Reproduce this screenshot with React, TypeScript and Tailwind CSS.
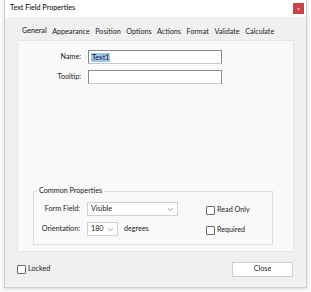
import React from "react";

const tabs = ["General", "Appearance", "Position", "Options", "Actions", "Format", "Validate", "Calculate"];

function Check({ label }: { label: string }) {
  return (
    <div className="flex items-center gap-[2px]">
      <span className="h-[9px] w-[9px] rounded-[1px] border border-[#6b6b6b] bg-white" />
      <span>{label}</span>
    </div>
  );
}

function Chevron() {
  return (
    <svg width="7" height="5" viewBox="0 0 7 5" className="text-[#8a8a8a]">
      <path d="M1 1.2 L3.5 3.6 L6 1.2" fill="none" stroke="currentColor" strokeWidth="0.8" />
    </svg>
  );
}

export default function App() {
  return (
    <div
      className="h-[292px] w-[311px] bg-[#fafafa] px-[4px] pb-[4px]"
      style={{ fontFamily: "Lato, 'Noto Sans', sans-serif" }}
    >
      <div className="flex h-[288px] flex-col border border-t-0 border-[#cfcfcf] bg-[#f0f0f0] text-[7.2px] text-[#1a1a1a] shadow-[0_1px_3px_rgba(0,0,0,0.15)]">
        <div className="flex h-[17px] items-center justify-between bg-white pl-[5px] pr-[2px]">
          <span className="text-[7.2px] font-medium text-[#111]">Text Field Properties</span>
          <span className="flex h-[11px] w-[11px] items-center justify-center bg-[#c9414a] text-[6px] leading-none text-white">
            ×
          </span>
        </div>

        <div className="flex flex-1 flex-col px-[12px] pt-[9px]">
          <div className="flex h-[14px] items-end gap-[5.5px] pl-[5px]">
            {tabs.map((t, i) => (
              <span
                key={t}
                className={i === 0 ? "pb-[3px] text-[#111]" : "pb-[2px] text-[#222]"}
              >
                {t}
              </span>
            ))}
          </div>

          <div className="flex h-[212px] flex-col border border-[#e6e6e6] bg-[#f9f9f9]">
            <div className="mt-[9px] flex flex-col gap-[6px]">
              <div className="flex items-center">
                <span className="w-[63px] text-right">Name:</span>
                <div className="ml-[7px] flex h-[14px] w-[134px] items-center border border-[#8a8a8a] border-b-[#c8c8c8] bg-white pl-[2px]">
                  <span className="bg-[#9ec6ec] px-[1px] leading-[9px] text-[#1a1a1a]">Text1</span>
                </div>
              </div>
              <div className="flex items-center">
                <span className="w-[63px] text-right">Tooltip:</span>
                <div className="ml-[7px] h-[14px] w-[134px] border border-[#8a8a8a] border-b-[#c8c8c8] bg-white" />
              </div>
            </div>

            <div className="mt-auto mb-[6px] ml-[15px] w-[240px]">
              <div className="relative h-[54px] border border-[#dcdcdc]">
                <span className="absolute -top-[6px] left-[3px] bg-[#f9f9f9] px-[2px] leading-[10px]">
                  Common Properties
                </span>
                <div className="flex pt-[10px]">
                  <div className="flex flex-col gap-[6px]">
                    <div className="flex items-center">
                      <span className="w-[46px] text-right">Form Field:</span>
                      <div className="ml-[7px] flex h-[14px] w-[91px] items-center justify-between border border-[#d0d0d0] bg-white pl-[3px] pr-[3px]">
                        <span>Visible</span>
                        <Chevron />
                      </div>
                    </div>
                    <div className="flex items-center">
                      <span className="w-[46px] text-right">Orientation:</span>
                      <div className="ml-[7px] flex h-[14px] w-[31px] items-center justify-between border border-[#d0d0d0] bg-white pl-[3px] pr-[3px]">
                        <span>180</span>
                        <Chevron />
                      </div>
                      <span className="ml-[6px]">degrees</span>
                    </div>
                  </div>
                  <div className="ml-[28px] flex flex-col gap-[9px] pt-[3px]">
                    <Check label="Read Only" />
                    <Check label="Required" />
                  </div>
                </div>
              </div>
            </div>
          </div>

          <div className="mt-[10px] flex items-center justify-between pr-[1px]">
            <Check label="Locked" />
            <div className="flex h-[15px] w-[61px] items-center justify-center border border-[#d0d0d0] bg-white">
              Close
            </div>
          </div>
        </div>
      </div>
    </div>
  );
}
